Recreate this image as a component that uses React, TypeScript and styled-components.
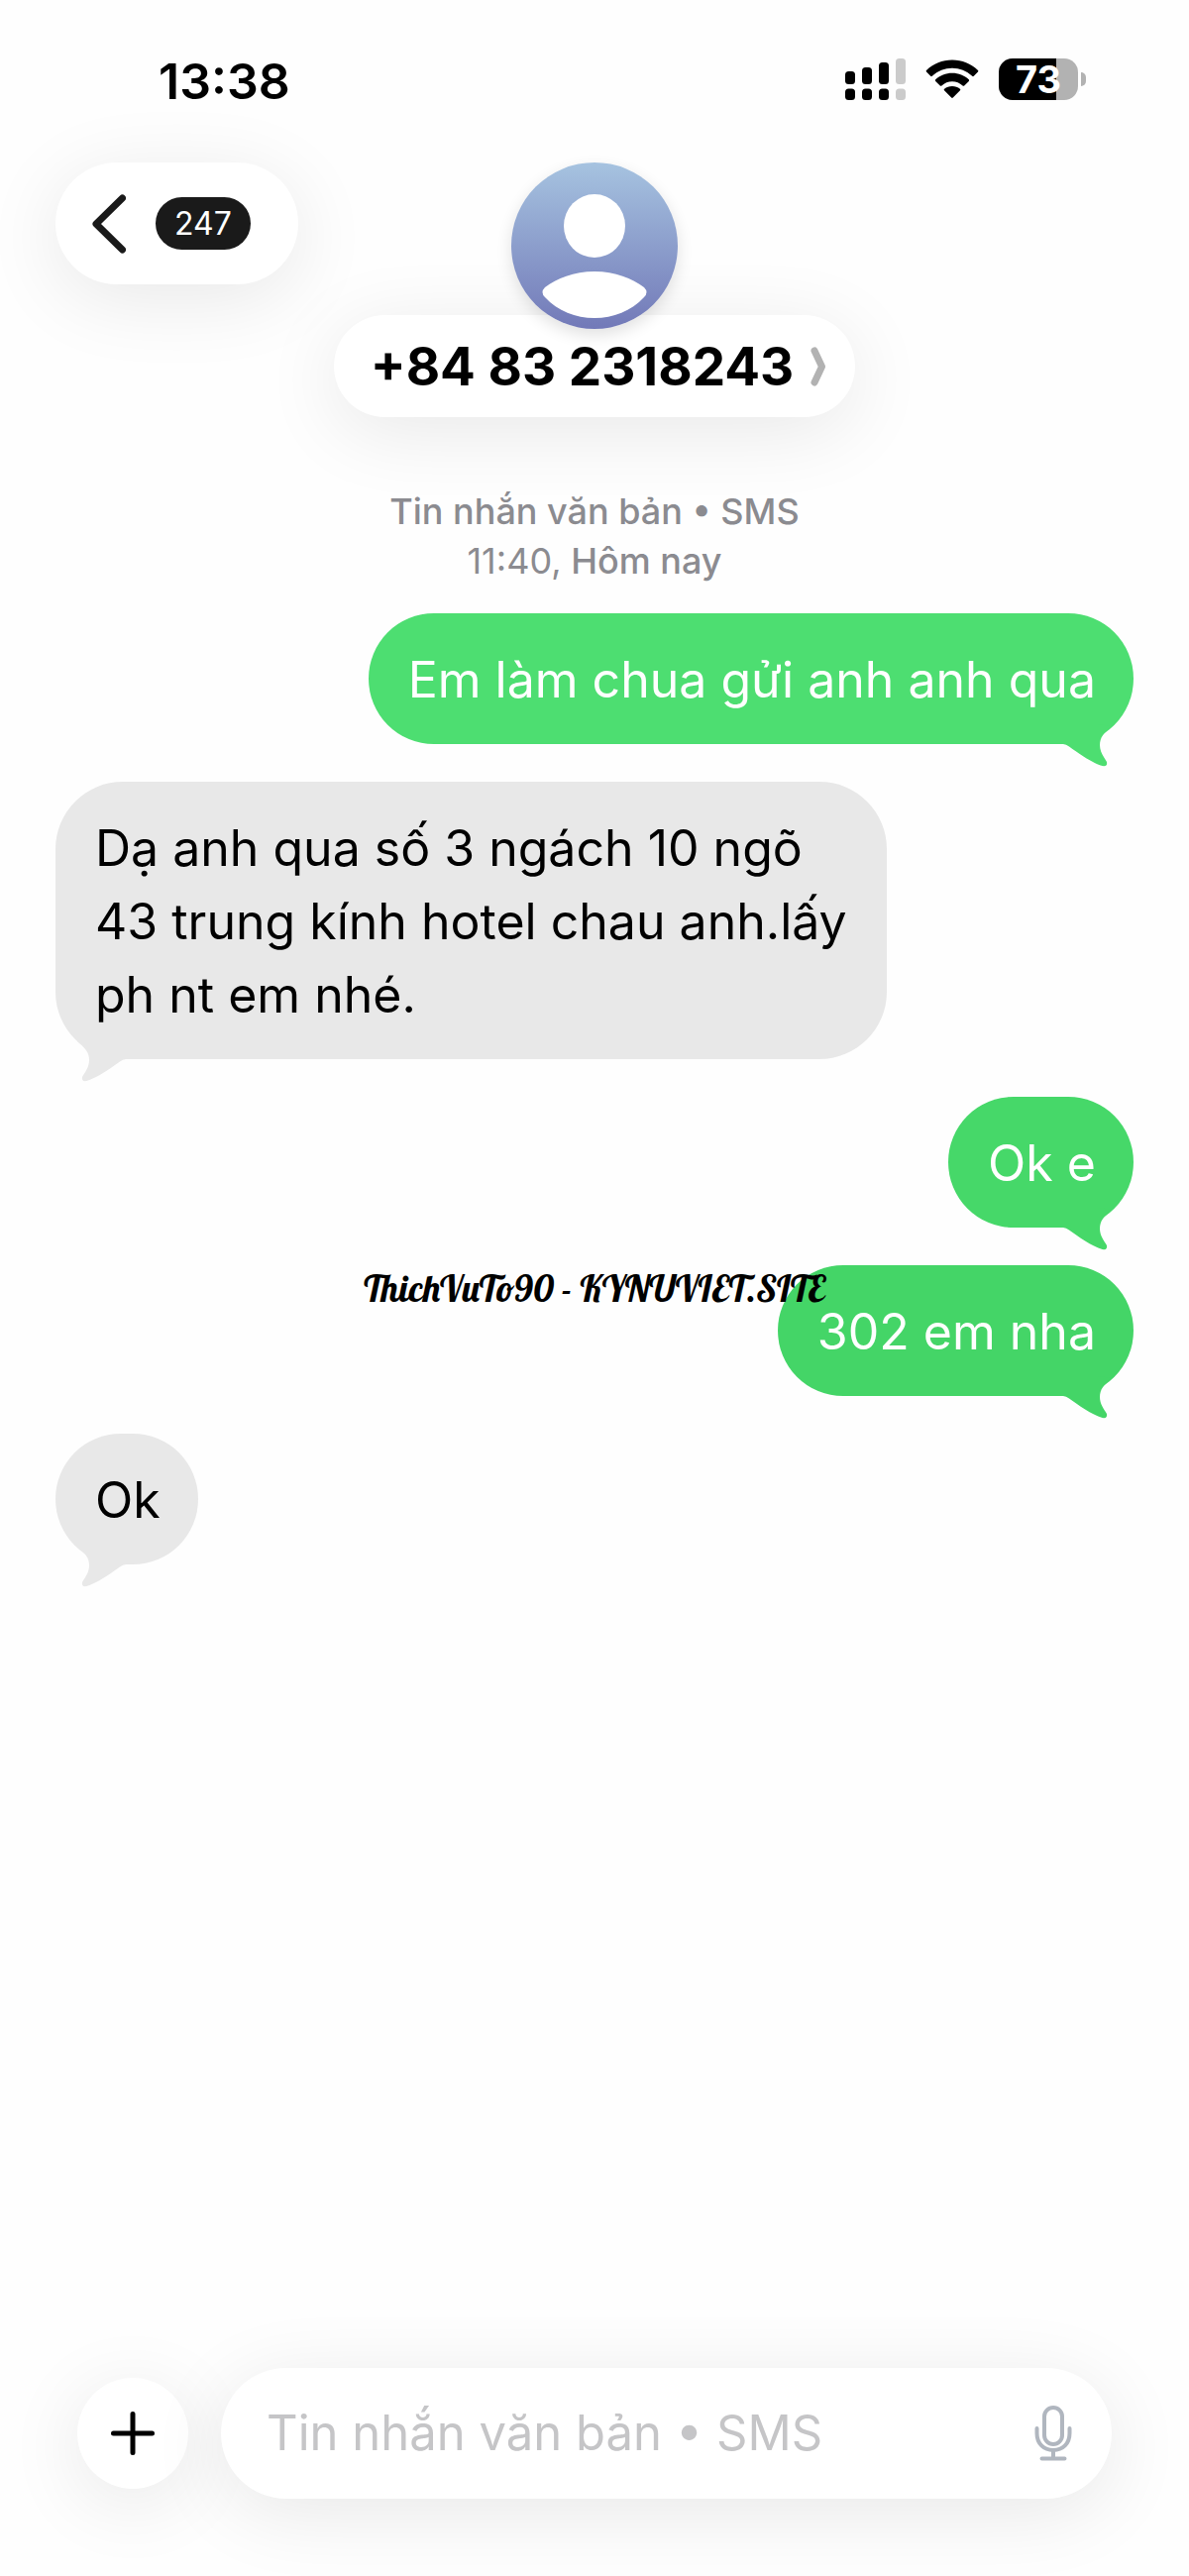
import React from "react";
import styled, { createGlobalStyle } from "styled-components";

const GlobalStyle = createGlobalStyle`
  *, *::before, *::after { box-sizing: border-box; }
  body {
    margin: 0;
    background: #fefefe;
    color: #000;
    font-family: Inter, "Liberation Sans", sans-serif;
  }
  button, input { font: inherit; color: inherit; }
`;

const Screen = styled.div`
  position: relative;
  display: flex;
  flex-direction: column;
  min-height: 100vh;
  overflow: hidden;
`;

const StatusBar = styled.div`
  display: flex;
  align-items: center;
  justify-content: space-between;
  height: 164px;
  padding: 0 104px 4px 160px;
`;

const Clock = styled.time`
  padding-top: 3px;
  font-size: 50px;
  line-height: 60px;
  font-weight: 600;
`;

const StatusIcons = styled.div`
  display: flex;
  align-items: center;
  gap: 20px;

  svg { display: block; }
`;

const Battery = styled.div`
  display: flex;
  align-items: center;
  gap: 3px;
`;

const BatteryBody = styled.div<{ $level: number }>`
  width: 80px;
  height: 42px;
  border-radius: 14px;
  background: linear-gradient(
    to right,
    #000 ${(p) => p.$level}%,
    #b2b2b2 ${(p) => p.$level}%
  );
  color: #fff;
  font-size: 38px;
  line-height: 43px;
  font-weight: 700;
  text-align: center;
`;

const BatteryCap = styled.div`
  width: 5px;
  height: 14px;
  border-radius: 0 7px 7px 0;
  background: #b2b2b2;
`;

const Header = styled.header`
  display: grid;
  grid-template-columns: 1fr auto 1fr;
  align-items: start;
  padding: 0 56px;
`;

const glass = `
  border: 0;
  background: #fff;
  box-shadow: 0 14px 80px rgba(0, 0, 0, 0.09);
`;

const BackButton = styled.button`
  ${glass}
  justify-self: start;
  display: flex;
  align-items: center;
  gap: 30px;
  height: 123px;
  padding: 0 48px 0 37px;
  border-radius: 62px;
`;

const UnreadBadge = styled.span`
  padding: 0 19px;
  border-radius: 27px;
  background: #1a1a1a;
  color: #fff;
  font-size: 32px;
  line-height: 53px;
`;

const Contact = styled.div`
  display: flex;
  flex-direction: column;
  align-items: center;
`;

const Avatar = styled.div`
  z-index: 1;
  width: 168px;
  height: 168px;
  margin-bottom: -14px;
  border-radius: 50%;
  box-shadow: 0 6px 16px rgba(0, 0, 0, 0.12);

  svg { display: block; }
`;

const ContactButton = styled.button`
  ${glass}
  display: flex;
  align-items: center;
  gap: 17px;
  height: 103px;
  padding: 0 29px 0 37px;
  border-radius: 52px;
  font-size: 53px;
  font-weight: 700;
  white-space: nowrap;
`;

const Thread = styled.main`
  flex: 1;
  padding: 70px 56px 80px;
`;

const Meta = styled.p`
  margin: 0 0 28px;
  color: #8b8b90;
  font-size: 36px;
  line-height: 50px;
  font-weight: 500;
  text-align: center;

  time { font-weight: 400; }
`;

const Messages = styled.ol`
  display: flex;
  flex-direction: column;
  gap: 38px;
  margin: 0;
  padding: 0;
  list-style: none;
`;

const Bubble = styled.li<{ $sent: boolean; $color: string }>`
  position: relative;
  align-self: ${(p) => (p.$sent ? "flex-end" : "flex-start")};
  max-width: 839px;
  padding: 30px 38px 28px 40px;
  border-radius: 68px;
  background: ${(p) => p.$color};
  color: ${(p) => (p.$sent ? "#fff" : "#000")};
  font-size: 50px;
  line-height: 74px;
`;

const TailShape = styled.svg<{ $sent: boolean }>`
  position: absolute;
  bottom: -24px;
  ${(p) => (p.$sent ? "right: 16px;" : "left: 16px; transform: scaleX(-1);")}
`;

const Composer = styled.form`
  display: flex;
  align-items: center;
  gap: 33px;
  padding: 0 78px 78px;
`;

const AddButton = styled.button`
  ${glass}
  display: grid;
  place-items: center;
  flex: none;
  width: 112px;
  height: 112px;
  padding: 0;
  border-radius: 50%;
`;

const Field = styled.div`
  ${glass}
  display: flex;
  align-items: center;
  flex: 1;
  min-width: 0;
  height: 132px;
  padding: 0 40px 0 46px;
  border-radius: 66px;
`;

const TextInput = styled.input`
  flex: 1;
  min-width: 0;
  padding: 0;
  border: 0;
  outline: 0;
  background: none;
  font-size: 49px;
  line-height: 74px;

  &::placeholder { color: #c5c5c7; opacity: 1; }
`;

const MicButton = styled.button`
  display: block;
  padding: 0;
  border: 0;
  background: none;

  svg { display: block; }
`;

const Watermark = styled.div`
  position: absolute;
  top: 50%;
  left: 50%;
  transform: translate(-50%, -50%);
  font-family: Lobster, "Liberation Serif", serif;
  font-size: 37px;
  line-height: 40px;
  white-space: nowrap;
  pointer-events: none;
`;

const SIGNAL_BARS = [
  { x: 0, top: 13, color: "#000" },
  { x: 17, top: 9, color: "#000" },
  { x: 34, top: 4, color: "#000" },
  { x: 51, top: 0, color: "#cbcbcb" },
];

const SignalIcon = () => (
  <svg width="61" height="42" viewBox="0 0 61 42" aria-label="Signal">
    {SIGNAL_BARS.map((bar) => (
      <g key={bar.x} fill={bar.color}>
        <rect x={bar.x} y={bar.top} width="10" height={26 - bar.top} rx="3.5" />
        <rect x={bar.x} y="30.5" width="10" height="11.5" rx="3.5" />
      </g>
    ))}
  </svg>
);

const WifiIcon = () => (
  <svg width="54" height="40" viewBox="0 0 54 40" aria-label="Wi-Fi">
    <path d="M27 0.5C37 0.5 46 4.3 53 11Q53.800 11.800 53 12.600L48.800 16.800Q48 17.500 47.200 16.800C41.500 11.500 34.500 8.700 27 8.700S12.500 11.500 6.800 16.800Q6 17.500 5.200 16.800L1 12.600Q0.200 11.800 1 11C8 4.300 17 0.500 27 0.500Z" />
    <path d="M27 13.800C33.500 13.800 39.300 16.200 43.800 20.300Q44.600 21.100 43.800 21.900L39.200 26.400Q38.500 27.100 37.600 26.400C34.600 23.700 31 22.200 27 22.200S19.400 23.700 16.400 26.400Q15.500 27.100 14.800 26.400L10.200 21.900Q9.400 21.100 10.200 20.300C14.700 16.200 20.500 13.800 27 13.800Z" />
    <path d="M27 27C30 27 32.700 28 34.900 29.700Q35.800 30.500 35 31.300L27.800 38.600Q27 39.400 26.200 38.600L19 31.300Q18.200 30.500 19.100 29.700C21.300 28 24 27 27 27Z" />
  </svg>
);

const Tail = ({ sent, color }: { sent: boolean; color: string }) => (
  <TailShape $sent={sent} width="60" height="44" viewBox="0 0 60 44" aria-hidden>
    <path
      fill={color}
      d="M5 0L5 20Q8 20 11 22.500C20 29 34 39 44.500 42Q50 43 49 38C46 33 42 28 42 21C42 13 46 9 54 2L40 0Z"
    />
  </TailShape>
);

type Message = { text: string; sent: boolean; color: string };

const MESSAGES: Message[] = [
  { text: "Em làm chua gửi anh anh qua", sent: true, color: "#4dde71" },
  {
    text: "Dạ anh qua số 3 ngách 10 ngõ 43 trung kính hotel chau anh.lấy ph nt em nhé.",
    sent: false,
    color: "#e8e8e8",
  },
  { text: "Ok e", sent: true, color: "#46d869" },
  { text: "302 em nha", sent: true, color: "#44d567" },
  { text: "Ok", sent: false, color: "#e8e8e8" },
];

export default function App() {
  return (
    <>
      <GlobalStyle />
      <Screen>
        <StatusBar>
          <Clock>13:38</Clock>
          <StatusIcons>
            <SignalIcon />
            <WifiIcon />
            <Battery>
              <BatteryBody $level={73}>73</BatteryBody>
              <BatteryCap />
            </Battery>
          </StatusIcons>
        </StatusBar>

        <Header>
          <BackButton type="button">
            <svg width="34" height="60" viewBox="0 0 34 60" fill="none" aria-hidden>
              <path d="M30.500 4L4 30L30.500 56" stroke="#1a1a1a" strokeWidth="7" strokeLinecap="round" strokeLinejoin="round" />
            </svg>
            <UnreadBadge>247</UnreadBadge>
          </BackButton>
          <Contact>
            <Avatar>
              <svg width="168" height="168" viewBox="0 0 168 168" aria-hidden>
                <defs>
                  <linearGradient id="avatar-sky" x1="0" y1="0" x2="0" y2="1">
                    <stop offset="0" stopColor="#a6c3e0" />
                    <stop offset="1" stopColor="#7279b8" />
                  </linearGradient>
                </defs>
                <circle cx="84" cy="84" r="84" fill="url(#avatar-sky)" />
                <ellipse cx="84" cy="64" rx="31" ry="32" fill="#fff" />
                <path fill="#fff" d="M84 110C105 110 122 117 134 126Q139 131 134 136C121 150 103 157 84 157S47 150 34 136Q29 131 34 126C46 117 63 110 84 110Z" />
              </svg>
            </Avatar>
            <ContactButton type="button">
              +84 83 2318243
              <svg width="16" height="40" viewBox="0 0 16 40" fill="none" aria-hidden>
                <path d="M4 4L11.500 20L4 36" stroke="#b2b2b2" strokeWidth="7" strokeLinecap="round" strokeLinejoin="round" />
              </svg>
            </ContactButton>
          </Contact>
        </Header>

        <Thread>
          <Meta>
            Tin nhắn văn bản • SMS
            <br />
            <time>11:40,</time> Hôm nay
          </Meta>
          <Messages>
            {MESSAGES.map((message) => (
              <Bubble key={message.text} $sent={message.sent} $color={message.color}>
                {message.text}
                <Tail sent={message.sent} color={message.color} />
              </Bubble>
            ))}
          </Messages>
        </Thread>

        <Composer>
          <AddButton type="button" aria-label="Add">
            <svg width="46" height="46" viewBox="0 0 46 46" fill="none" aria-hidden>
              <path d="M23 3.500V42.500M3.500 23H42.500" stroke="#000" strokeWidth="5" strokeLinecap="round" />
            </svg>
          </AddButton>
          <Field>
            <TextInput type="text" aria-label="Message" placeholder="Tin nhắn văn bản • SMS" />
            <MicButton type="button" aria-label="Dictate">
              <svg width="38" height="56" viewBox="0 0 38 56" fill="none" stroke="#b0b6bf" strokeWidth="4" strokeLinecap="round" aria-hidden>
                <rect x="10" y="2" width="18" height="37" rx="9" />
                <path d="M2.500 23V28C2.500 38.500 9.500 45 19 45S35.500 38.500 35.500 28V23M19 45V53.500M7.500 53.500H30.500" />
              </svg>
            </MicButton>
          </Field>
        </Composer>
        <Watermark>ThichVuTo90 - KYNUVIET.SITE</Watermark>
      </Screen>
    </>
  );
}
